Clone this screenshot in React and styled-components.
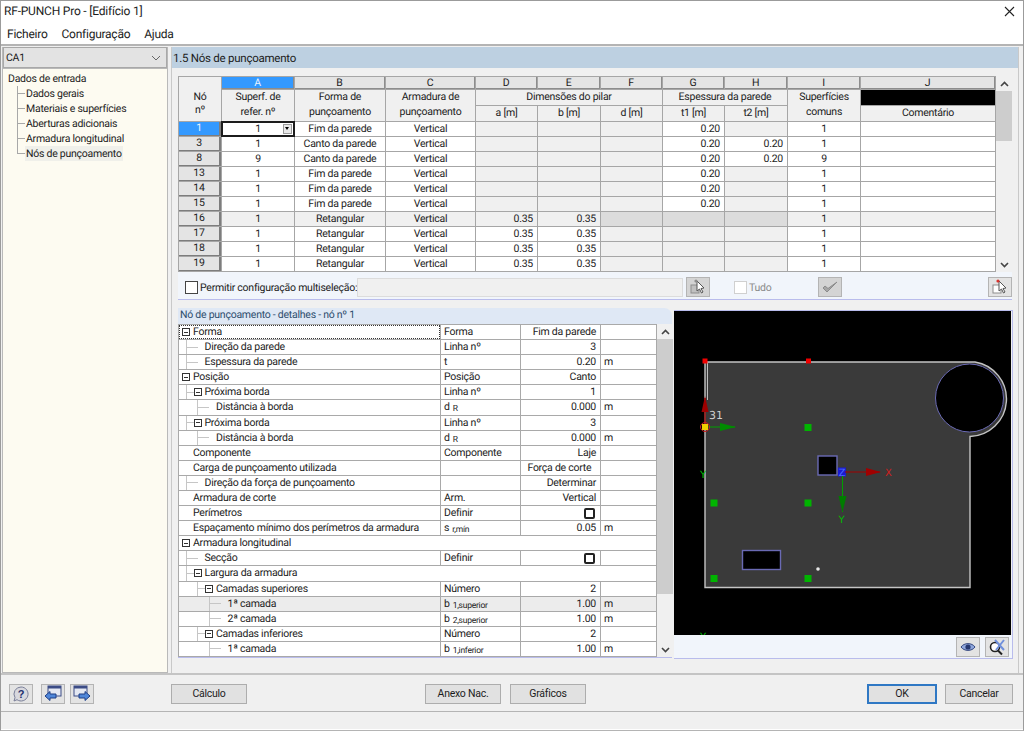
import { Fragment } from 'react';
import styled, { createGlobalStyle } from 'styled-components';

const GlobalStyle = createGlobalStyle`
  html, body {
    margin: 0;
    padding: 0;
    background: #f0f0f0;
  }
  * {
    box-sizing: border-box;
  }
`;

const Window = styled.div`
  width: 1024px;
  height: 731px;
  display: flex;
  flex-direction: column;
  overflow: hidden;
  background: #f0f0f0;
  color: #1c1c1c;
  font-family: Roboto, 'Liberation Sans', sans-serif;
  font-size: 10.5px;
  letter-spacing: -0.25px;
  text-rendering: geometricPrecision;
  border: 1px solid #9b9b9b;
  border-bottom-color: #b4b4b4;
`;

const TitleBar = styled.div`
  height: 22px;
  flex: none;
  display: flex;
  align-items: center;
  justify-content: space-between;
  padding: 0 8px 2px 3px;
  background: #fff;
  font-size: 12px;
  letter-spacing: -0.2px;
`;

const MenuBar = styled.div`
  height: 21px;
  flex: none;
  display: flex;
  align-items: center;
  gap: 14px;
  padding-left: 6px;
  background: #fff;
  font-size: 12px;
  letter-spacing: -0.25px;
`;

const Body = styled.div`
  flex: 1;
  min-height: 0;
  display: flex;
  gap: 3px;
  padding: 1px 4px 0 1px;
  border-top: 2px solid #b4b4b4;
`;

const Side = styled.aside`
  width: 166px;
  flex: none;
  display: flex;
  flex-direction: column;
  border: 1px solid #b9b9b9;
  border-top: none;
`;

const Combo = styled.div`
  height: 21px;
  flex: none;
  display: flex;
  align-items: center;
  justify-content: space-between;
  padding: 0 5px 0 2px;
  background: #e3e3e3;
  border: 1px solid #a8a8a8;
`;

const Tree = styled.div`
  flex: 1;
  display: flex;
  flex-direction: column;
  padding: 2px 0 0 5px;
  background: #fdfbf1;
  border-top: 1px solid #b9b9b9;
`;

const TreeRoot = styled.div`
  height: 15px;
  line-height: 15px;
`;

const TreeItem = styled.div`
  height: 15px;
  line-height: 15px;
  display: flex;
  align-items: center;
  padding-left: 8px;
  margin-left: 9px;
  background: linear-gradient(#a8a8a8, #a8a8a8) 0 50% / 8px 1px no-repeat,
    linear-gradient(#a8a8a8, #a8a8a8) 0 0 / 1px ${(p) => (p.$last ? '50%' : '100%')} no-repeat;

  span {
    padding: 0 1px;
    background: ${(p) => (p.$active ? '#f0f0ea' : 'transparent')};
  }
`;

const Main = styled.main`
  flex: 1;
  min-width: 0;
  display: flex;
  flex-direction: column;
  border-left: 1px solid #c9c9c9;
  border-right: 1px solid #c9c9c9;
`;

const Heading = styled.div`
  height: 21px;
  flex: none;
  display: flex;
  align-items: center;
  padding-left: 1px;
  background: #bdd0e1;
  font-size: 11.5px;
`;

const Content = styled.div`
  flex: 1;
  display: flex;
  flex-direction: column;
  padding: 8px 6px 0 6px;
`;

const TableRow = styled.div`
  display: flex;
  height: 196px;
  flex: none;
`;

const TableGrid = styled.div`
  width: 818px;
  flex: none;
  display: grid;
  grid-template-columns: 42px 72px 90px 89px 61px 62px 61px 61px 62px 72px 134px;
  grid-template-rows: 12px 15px 15px repeat(10, 14px);
  gap: 1px;
  background: #a6a6a6;
  border: 1px solid #a6a6a6;
  text-align: center;
  line-height: 14px;
`;

const Letter = styled.div`
  background: ${(p) => (p.$active ? '#3399ff' : '#e4e4e4')};
  color: ${(p) => (p.$active ? '#e8f3ff' : '#1c1c1c')};
  line-height: 11px;
  border-right: 1px solid #8c8c8c;
  border-bottom: 1px solid #8c8c8c;
`;

const HeadCell = styled.div`
  display: flex;
  align-items: center;
  justify-content: center;
  padding-bottom: 3px;
  line-height: 15px;
  background: #f0f0f0;
  grid-column: ${(p) => p.$col || 'auto'};
  grid-row: ${(p) => p.$row || 'auto'};
`;

const CornerCell = styled(HeadCell)`
  padding: 8px 0 0;
  line-height: 13px;
`;

const BlackCell = styled.div`
  background: #000;
`;

const RowHead = styled.div`
  background: ${(p) => (p.$active ? '#3399ff' : '#e4e4e4')};
  color: ${(p) => (p.$active ? '#e8f3ff' : '#1c1c1c')};
  line-height: 12px;
  border-right: 2px solid #7d7d7d;
  border-bottom: 1px solid #7d7d7d;
`;

const Cell = styled.div`
  padding: 0 ${(p) => (p.$num ? '4px' : '0')};
  text-align: ${(p) => (p.$num ? 'right' : 'center')};
  background: ${(p) => {
    if (p.$hot) return p.$off ? '#dcdcdc' : '#f0f0f0';
    return p.$off ? '#f0f0f0' : '#fff';
  }};
`;

const EditCell = styled.div`
  position: relative;
  background: #fff;
  outline: 2px solid #1c1c1c;
  outline-offset: -1px;
  z-index: 1;
`;

const DropMark = styled.span`
  position: absolute;
  top: 2px;
  right: 2px;
  width: 9px;
  height: 10px;
  background: #e8e8e8;
  border: 1px solid #9a9a9a;

  &::after {
    content: '';
    position: absolute;
    left: 1px;
    top: 2px;
    border-left: 2.5px solid transparent;
    border-right: 2.5px solid transparent;
    border-top: 3px solid #000;
  }
`;

const ScrollBar = styled.div`
  width: 16px;
  flex: none;
  display: flex;
  flex-direction: column;
  align-items: stretch;
  background: #f0f0f0;
`;

const ScrollArrow = styled.div`
  height: 15px;
  flex: none;
  display: flex;
  align-items: center;
  justify-content: center;
  margin-top: ${(p) => (p.$end ? 'auto' : '0')};
`;

const ScrollThumb = styled.div`
  height: ${(p) => p.$h}px;
  flex: none;
  background: #cdcdcd;
`;

const OptionBar = styled.div`
  height: 28px;
  flex: none;
  display: flex;
  align-items: center;
  padding: 3px 3px 0 7px;
  background: #f1f5fb;
  border-bottom: 1px solid #b9bcec;
`;

const Check = styled.span`
  width: 13px;
  height: 13px;
  flex: none;
  background: #fff;
  border: 1px solid ${(p) => (p.$dim ? '#d0d0d0' : '#444')};
  margin-left: ${(p) => p.$ml || 0}px;
`;

const OptionLabel = styled.span`
  margin-left: 2px;
  color: ${(p) => (p.$dim ? '#8a8a8a' : '#1c1c1c')};
  width: ${(p) => p.$w}px;
  flex: none;
  white-space: nowrap;
`;

const FakeInput = styled.div`
  width: 326px;
  height: 19px;
  flex: none;
  background: #f0f0f0;
  border: 1px solid #dcdcdc;
`;

const IconButton = styled.button`
  width: 24px;
  height: 20px;
  flex: none;
  padding: 0;
  display: flex;
  align-items: center;
  justify-content: center;
  background: ${(p) => (p.$dim ? '#d4d4d4' : '#e3e3e3')};
  border: 1px solid #b4b4b4;
  margin-left: ${(p) => p.$ml || 0}px;
`;

const Lower = styled.div`
  display: flex;
  flex: none;
  gap: 2px;
  margin-top: 8px;
`;

const Details = styled.section`
  width: 494px;
  flex: none;
  display: flex;
  flex-direction: column;
`;

const DetailsTitle = styled.div`
  height: 16px;
  flex: none;
  padding-left: 2px;
  line-height: 13px;
  background: #dfe8f5;
  color: #2d4d6d;
  border-top-right-radius: 8px;
`;

const DetailsBody = styled.div`
  display: flex;
  height: 334px;
  border-bottom: 1px solid #b9bcec;
`;

const PropGrid = styled.div`
  width: 479px;
  flex: none;
  height: 333px;
  display: grid;
  grid-template-columns: 261px 79px 79px 55px;
  grid-auto-rows: 1fr;
  gap: 1px;
  background: #a9a9a9;
  border: 1px solid #a9a9a9;
  line-height: 14px;
`;

const PropLabel = styled.div`
  display: flex;
  align-items: center;
  grid-column: ${(p) => (p.$wide ? '1 / -1' : 'auto')};
  background: ${(p) => (p.$hot ? '#ececec' : '#fff')};
  padding-left: ${(p) => p.$pad}px;
  white-space: nowrap;
  outline: ${(p) => (p.$focus ? '1px dotted #333' : 'none')};
  outline-offset: -1px;
`;

// elbow of the tree: a light vertical and a light horizontal line
const TreeStub = styled.span`
  width: ${(p) => p.$w}px;
  align-self: stretch;
  flex: none;
  margin-left: -19px;
  margin-right: ${(p) => 19 - p.$w}px;
  background: linear-gradient(#c6c6c6, #c6c6c6) 0 50% / 100% 1px no-repeat,
    linear-gradient(#c6c6c6, #c6c6c6) 0 0 / 1px 100% no-repeat;
`;

const BranchStub = styled(TreeStub)`
  margin-right: 0;
`;

const Toggle = styled.span`
  width: 8px;
  height: 8px;
  flex: none;
  margin: 0 3px 0 ${(p) => (p.$nested ? '0' : '-11px')};
  display: flex;
  align-items: center;
  justify-content: center;
  border: 1px solid #333;
  background: #fff;

  &::after {
    content: '';
    width: 4px;
    height: 1px;
    background: #333;
  }
`;

const PropCell = styled.div`
  display: flex;
  align-items: center;
  justify-content: ${(p) => (p.$end ? 'flex-end' : 'flex-start')};
  background: ${(p) => (p.$hot ? '#ececec' : '#fff')};
  padding: 0 ${(p) => (p.$end ? '4px' : '3px')};
  white-space: pre;
`;

const Sub = styled.span`
  font-size: 8.5px;
  margin-left: 3px;
  position: relative;
  top: 2px;
`;

const BoxMark = styled.span`
  width: 11px;
  height: 11px;
  margin-right: 1px;
  background: #fff;
  border: 2px solid #222;
  border-radius: 2px;
`;

const PreviewPane = styled.section`
  width: 339px;
  flex: none;
  display: flex;
  flex-direction: column;
  border-right: 1px solid #b9bcec;
  border-bottom: 1px solid #b9bcec;
  border-top: 1px solid #b9bcec;
  margin-top: 2px;
  height: 349px;
`;

const PreviewCanvas = styled.svg`
  display: block;
  flex: none;
  letter-spacing: 0;
`;

const PreviewTools = styled.div`
  flex: 1;
  display: flex;
  align-items: center;
  justify-content: flex-end;
  gap: 5px;
  padding-right: 3px;
  background: #f1f5fb;
`;

const Footer = styled.footer`
  height: 38px;
  flex: none;
  display: flex;
  align-items: center;
  padding: 1px 9px 0 8px;
  border-top: 2px solid #c4c4c4;
`;

const FooterGroup = styled.div`
  display: flex;
  gap: 5px;
  margin-left: ${(p) => p.$ml}px;
`;

const Button = styled.button`
  width: ${(p) => p.$w}px;
  height: 20px;
  padding: 0;
  font: inherit;
  letter-spacing: inherit;
  color: #1c1c1c;
  background: #e1e1e1;
  border: 1px solid ${(p) => (p.$primary ? '#2f78c4' : '#adadad')};
  outline: ${(p) => (p.$primary ? '1px solid #2f78c4' : 'none')};
  outline-offset: -2px;
`;

const StatusBar = styled.div`
  height: 19px;
  flex: none;
  border-top: 1px solid #b4b4b4;
  border-bottom: 1px solid #fff;
`;

const letters = ['A', 'B', 'C', 'D', 'E', 'F', 'G', 'H', 'I', 'J'];

const wall = 'Fim da parede';
const corner = 'Canto da parede';
const rect = 'Retangular';

const rows = [
  { no: '1', ref: '1', form: wall, t1: '0.20', com: '1' },
  { no: '3', ref: '1', form: corner, t1: '0.20', t2: '0.20', com: '1' },
  { no: '8', ref: '9', form: corner, t1: '0.20', t2: '0.20', com: '9' },
  { no: '13', ref: '1', form: wall, t1: '0.20', com: '1' },
  { no: '14', ref: '1', form: wall, t1: '0.20', com: '1' },
  { no: '15', ref: '1', form: wall, t1: '0.20', com: '1' },
  { no: '16', ref: '1', form: rect, a: '0.35', b: '0.35', com: '1', hot: true },
  { no: '17', ref: '1', form: rect, a: '0.35', b: '0.35', com: '1' },
  { no: '18', ref: '1', form: rect, a: '0.35', b: '0.35', com: '1' },
  { no: '19', ref: '1', form: rect, a: '0.35', b: '0.35', com: '1' },
];

const props = [
  { label: 'Forma', level: 0, box: true, focus: true, sym: 'Forma', value: 'Fim da parede' },
  { label: 'Direção da parede', level: 1, sym: 'Linha nº', value: '3' },
  { label: 'Espessura da parede', level: 1, sym: 't', value: '0.20', unit: 'm' },
  { label: 'Posição', level: 0, box: true, sym: 'Posição', value: 'Canto' },
  { label: 'Próxima borda', level: 1, box: true, sym: 'Linha nº', value: '1' },
  { label: 'Distância à borda', level: 2, sym: 'd', sub: 'R', value: '0.000', unit: 'm' },
  { label: 'Próxima borda', level: 1, box: true, sym: 'Linha nº', value: '3' },
  { label: 'Distância à borda', level: 2, sym: 'd', sub: 'R', value: '0.000', unit: 'm' },
  { label: 'Componente', level: 0, plain: true, sym: 'Componente', value: 'Laje' },
  { label: 'Carga de punçoamento utilizada', level: 0, plain: true, value: 'Força de corte  ' },
  { label: 'Direção da força de punçoamento', level: 1, value: 'Determinar' },
  { label: 'Armadura de corte', level: 0, plain: true, sym: 'Arm.', value: 'Vertical' },
  { label: 'Perímetros', level: 0, plain: true, sym: 'Definir', check: true },
  { label: 'Espaçamento mínimo dos perímetros da armadura', level: 0, plain: true, sym: 's', sub: 'r,mín', value: '0.05', unit: 'm' },
  { label: 'Armadura longitudinal', level: 0, box: true, wide: true },
  { label: 'Secção', level: 1, sym: 'Definir', check: true },
  { label: 'Largura da armadura', level: 1, box: true, wide: true },
  { label: 'Camadas superiores', level: 2, box: true, sym: 'Número', value: '2' },
  { label: '1ª camada', level: 3, hot: true, sym: 'b', sub: '1,superior', value: '1.00', unit: 'm' },
  { label: '2ª camada', level: 3, sym: 'b', sub: '2,superior', value: '1.00', unit: 'm' },
  { label: 'Camadas inferiores', level: 2, box: true, sym: 'Número', value: '2' },
  { label: '1ª camada', level: 3, sym: 'b', sub: '1,inferior', value: '1.00', unit: 'm' },
];

const Chevron = ({ up }) => (
  <svg width="9" height="6" viewBox="0 0 9 6">
    <path
      d={up ? 'M1 5 4.5 1.5 8 5' : 'M1 1 4.5 4.5 8 1'}
      fill="none"
      stroke="#444"
      strokeWidth="1.6"
    />
  </svg>
);

const PickIcon = ({ dim }) => (
  <svg width="18" height="18" viewBox="0 0 18 18">
    <rect x="2" y="7" width="8" height="8" fill={dim ? '#c0c0c0' : '#fff'} stroke="#8d8d8d" />
    <path d="M8 3 8 13 10.5 11 12.5 15 14 14 12 10.5 15 10Z" fill="#fff" stroke="#555" />
    <circle cx="7" cy="3" r="1.6" fill={dim ? '#8d8d8d' : '#d8342f'} />
  </svg>
);

const TickIcon = () => (
  <svg width="18" height="16" viewBox="0 0 18 16">
    <path d="M2 9 6 13 16 3 7 9.5 4 7Z" fill="#a6a6a6" stroke="#8c8c8c" />
  </svg>
);

const EyeIcon = () => (
  <svg width="16" height="12" viewBox="0 0 16 12">
    <path d="M1 6C4 1.5 12 1.5 15 6 12 10.5 4 10.5 1 6Z" fill="#8ea6dc" stroke="#34477f" />
    <circle cx="8" cy="6" r="2.6" fill="#26376f" />
  </svg>
);

const ZoomOffIcon = () => (
  <svg width="18" height="18" viewBox="0 0 18 18">
    <circle cx="7" cy="9" r="4.5" fill="#fff" stroke="#222" strokeWidth="1.6" />
    <path d="M10 12.5 14 16.5" stroke="#222" strokeWidth="2" />
    <path d="M7 2 16 12M16 2 8 12" stroke="#6f8fdc" strokeWidth="2" />
  </svg>
);

const HelpIcon = () => (
  <svg width="18" height="18" viewBox="0 0 18 18">
    <path d="M9 2a7 7 0 1 1-4 12.7L2 16l1-3.4A7 7 0 0 1 9 2Z" fill="#d8d8de" stroke="#7a7f99" />
    <text x="9" y="13" textAnchor="middle" fontFamily="Liberation Sans, sans-serif" fontWeight="700" fontSize="11" fill="#23306e">?</text>
  </svg>
);

const PageIcon = ({ flip }) => (
  <svg width="20" height="18" viewBox="0 0 20 18">
    <rect x={flip ? 2 : 5} y="1" width="13" height="10" fill="#e4e8f2" stroke="#3c4c86" />
    <rect x={flip ? 2 : 5} y="1" width="13" height="2.5" fill="#3c4c86" />
    <path
      d={flip ? 'M7 9H13V6.5L18 11 13 15.5V13H7Z' : 'M13 9H7V6.5L2 11 7 15.5V13H13Z'}
      fill="#4f86d8"
      stroke="#1f3f86"
    />
  </svg>
);

// drawing coordinates are the picture's own, shifted to the canvas origin
const Node = ({ x, y, c = '#00b400', s = 7 }) => (
  <rect x={x - s / 2} y={y - s / 2} width={s} height={s} fill={c} />
);

const Plate = () => (
  <PreviewCanvas width="337" height="324" viewBox="0 0 337 324">
    <rect width="337" height="324" fill="#000" />
    <g transform="translate(-674 -311)">
      <path
        d="M705 362H975A37.5 37.5 0 0 1 970 436.5V587.5H705Z"
        fill="#3a3a3a"
        stroke="#c4c4c4"
        strokeWidth="1.4"
      />
      <path d="M707.5 362V400" stroke="#bdbdbd" strokeWidth="1" />
      <circle cx="969.5" cy="398" r="34" fill="#000" stroke="#6a6ab4" strokeWidth="1" />
      <rect x="818" y="456" width="19" height="19" fill="#000" stroke="#6a6ab4" strokeWidth="1.4" />
      <rect x="742.5" y="550.5" width="38" height="19" fill="#000" stroke="#6a6ab4" strokeWidth="1.4" />
      <path d="M705 427V398" stroke="#8c0000" strokeWidth="1.5" />
      <path d="M705 396 701.5 412H708.5Z" fill="#9c0000" />
      <path d="M705 427H735" stroke="#00a000" strokeWidth="1" />
      <path d="M736 427 720 423V431Z" fill="#008c00" />
      <text x="709" y="419" fill="#d0d0d0" fontSize="11" fontFamily="DejaVu Sans, sans-serif">31</text>
      <circle cx="705" cy="427" r="4.5" fill="none" stroke="#d02020" />
      <rect x="702" y="424" width="6" height="6" fill="#f0d000" />
      <text x="703" y="478" textAnchor="middle" fill="#00c000" fontSize="10" fontFamily="DejaVu Sans, sans-serif">Y</text>
      <text x="703" y="640" textAnchor="middle" fill="#00c000" fontSize="10" fontFamily="DejaVu Sans, sans-serif">Y</text>
      <Node x={705} y={361} c="#f00000" s={5} />
      <Node x={808.5} y={361} c="#f00000" s={5} />
      <Node x={808} y={427.5} />
      <Node x={714} y={503} />
      <Node x={808} y={503} />
      <Node x={714} y={578.5} />
      <Node x={808} y={578.5} />
      <circle cx="818" cy="569" r="1.8" fill="#e8e8e8" />
      <rect x="838" y="467.5" width="8" height="9" fill="#1a1ad0" />
      <text x="842" y="476" textAnchor="middle" fill="#4a6aff" fontSize="10" fontFamily="DejaVu Sans, sans-serif">Z</text>
      <path d="M845 472H880" stroke="#a00000" strokeWidth="1" />
      <path d="M881 472 866 468V476Z" fill="#a00000" />
      <text x="888.5" y="476" textAnchor="middle" fill="#d02020" fontSize="10" fontFamily="DejaVu Sans, sans-serif">X</text>
      <path d="M842.5 476V512" stroke="#00a000" strokeWidth="1" />
      <path d="M842.5 512 838.5 496H846.5Z" fill="#007c00" />
      <text x="841.5" y="523" textAnchor="middle" fill="#00c000" fontSize="10" fontFamily="DejaVu Sans, sans-serif">Y</text>
    </g>
  </PreviewCanvas>
);

const PropRow = ({ row }) => {
  const pad = 14 + row.level * 11.5;
  const nested = row.box && row.level > 0;
  return (
    <>
      <PropLabel $pad={pad} $wide={row.wide} $hot={row.hot} $focus={row.focus}>
        {nested && <BranchStub $w={8} />}
        {row.box && <Toggle $nested={nested} />}
        {!row.box && !row.plain && row.level > 0 && <TreeStub $w={12} />}
        {row.label}
      </PropLabel>
      {!row.wide && (
        <>
          <PropCell $hot={row.hot}>
            {row.sym}
            {row.sub && <Sub>{row.sub}</Sub>}
          </PropCell>
          <PropCell $end $hot={row.hot}>
            {row.check ? <BoxMark /> : row.value}
          </PropCell>
          <PropCell $hot={row.hot}>{row.unit}</PropCell>
        </>
      )}
    </>
  );
};

const App = () => {
  return (
    <>
      <GlobalStyle />
      <Window>
        <TitleBar>
          <span>RF-PUNCH Pro - [Edifício 1]</span>
          <svg width="11" height="11" viewBox="0 0 11 11">
            <path d="M1 1 10 10M10 1 1 10" stroke="#222" strokeWidth="1.1" />
          </svg>
        </TitleBar>
        <MenuBar>
          <span>Ficheiro</span>
          <span>Configuração</span>
          <span>Ajuda</span>
        </MenuBar>
        <Body>
          <Side>
            <Combo>
              <span>CA1</span>
              <svg width="10" height="6" viewBox="0 0 10 6">
                <path d="M1 1 5 5 9 1" fill="none" stroke="#666" />
              </svg>
            </Combo>
            <Tree>
              <TreeRoot>Dados de entrada</TreeRoot>
              <TreeItem><span>Dados gerais</span></TreeItem>
              <TreeItem><span>Materiais e superfícies</span></TreeItem>
              <TreeItem><span>Aberturas adicionais</span></TreeItem>
              <TreeItem><span>Armadura longitudinal</span></TreeItem>
              <TreeItem $last $active><span>Nós de punçoamento</span></TreeItem>
            </Tree>
          </Side>
          <Main>
            <Heading>1.5 Nós de punçoamento</Heading>
            <Content>
              <TableRow>
                <TableGrid>
                  <CornerCell $col="1" $row="1 / 4">
                    <span>Nó<br />nº</span>
                  </CornerCell>
                  {letters.map((l) => (
                    <Letter key={l} $active={l === 'A'}>{l}</Letter>
                  ))}
                  <HeadCell $col="2" $row="2 / 4"><span>Superf. de<br />refer. nº</span></HeadCell>
                  <HeadCell $col="3" $row="2 / 4"><span>Forma de<br />punçoamento</span></HeadCell>
                  <HeadCell $col="4" $row="2 / 4"><span>Armadura de<br />punçoamento</span></HeadCell>
                  <HeadCell $col="5 / 8" $row="2">Dimensões do pilar</HeadCell>
                  <HeadCell $col="8 / 10" $row="2">Espessura da parede</HeadCell>
                  <HeadCell $col="10" $row="2 / 4"><span>Superfícies<br />comuns</span></HeadCell>
                  <BlackCell />
                  <HeadCell $col="5" $row="3">a [m]</HeadCell>
                  <HeadCell $col="6" $row="3">b [m]</HeadCell>
                  <HeadCell $col="7" $row="3">d [m]</HeadCell>
                  <HeadCell $col="8" $row="3">t1 [m]</HeadCell>
                  <HeadCell $col="9" $row="3">t2 [m]</HeadCell>
                  <HeadCell $col="11" $row="3">Comentário</HeadCell>
                  {rows.map((r, i) => (
                    <Fragment key={r.no}>
                      <RowHead $active={i === 0}>{r.no}</RowHead>
                      {i === 0 ? (
                        <EditCell>{r.ref}<DropMark /></EditCell>
                      ) : (
                        <Cell $hot={r.hot}>{r.ref}</Cell>
                      )}
                      <Cell $hot={r.hot}>{r.form}</Cell>
                      <Cell $hot={r.hot}>Vertical</Cell>
                      <Cell $num $hot={r.hot} $off={!r.a}>{r.a}</Cell>
                      <Cell $num $hot={r.hot} $off={!r.b}>{r.b}</Cell>
                      <Cell $num $hot={r.hot} $off />
                      <Cell $num $hot={r.hot} $off={!r.t1}>{r.t1}</Cell>
                      <Cell $num $hot={r.hot} $off={!r.t2}>{r.t2}</Cell>
                      <Cell $hot={r.hot}>{r.com}</Cell>
                      <Cell $hot={r.hot} />
                    </Fragment>
                  ))}
                </TableGrid>
                <ScrollBar>
                  <ScrollArrow><Chevron up /></ScrollArrow>
                  <ScrollThumb $h={50} />
                  <ScrollArrow $end><Chevron /></ScrollArrow>
                </ScrollBar>
              </TableRow>
              <OptionBar>
                <Check />
                <OptionLabel $w={157}>Permitir configuração multiseleção:</OptionLabel>
                <FakeInput />
                <IconButton $dim $ml={3}><PickIcon dim /></IconButton>
                <Check $dim $ml={24} />
                <OptionLabel $dim $w={69}>Tudo</OptionLabel>
                <IconButton $dim><TickIcon /></IconButton>
                <IconButton $ml={146}><PickIcon /></IconButton>
              </OptionBar>
              <Lower>
                <Details>
                  <DetailsTitle>Nó de punçoamento - detalhes - nó nº 1</DetailsTitle>
                  <DetailsBody>
                    <PropGrid>
                      {props.map((row, i) => (
                        <PropRow key={i} row={row} />
                      ))}
                    </PropGrid>
                    <ScrollBar>
                      <ScrollArrow><Chevron up /></ScrollArrow>
                      <ScrollThumb $h={255} />
                      <ScrollArrow $end><Chevron /></ScrollArrow>
                    </ScrollBar>
                  </DetailsBody>
                </Details>
                <PreviewPane>
                  <Plate />
                  <PreviewTools>
                    <IconButton><EyeIcon /></IconButton>
                    <IconButton><ZoomOffIcon /></IconButton>
                  </PreviewTools>
                </PreviewPane>
              </Lower>
            </Content>
          </Main>
        </Body>
        <Footer>
          <FooterGroup $ml={0}>
            <IconButton><HelpIcon /></IconButton>
          </FooterGroup>
          <FooterGroup $ml={8}>
            <IconButton><PageIcon /></IconButton>
            <IconButton><PageIcon flip /></IconButton>
          </FooterGroup>
          <FooterGroup $ml={77}>
            <Button $w={76}>Cálculo</Button>
          </FooterGroup>
          <FooterGroup $ml={178}>
            <Button $w={76}>Anexo Nac.</Button>
          </FooterGroup>
          <FooterGroup $ml={9}>
            <Button $w={76}>Gráficos</Button>
          </FooterGroup>
          <FooterGroup $ml={281}>
            <Button $primary $w={70}>OK</Button>
          </FooterGroup>
          <FooterGroup $ml={8}>
            <Button $w={68}>Cancelar</Button>
          </FooterGroup>
        </Footer>
        <StatusBar />
      </Window>
    </>
  );
};

export default App;
